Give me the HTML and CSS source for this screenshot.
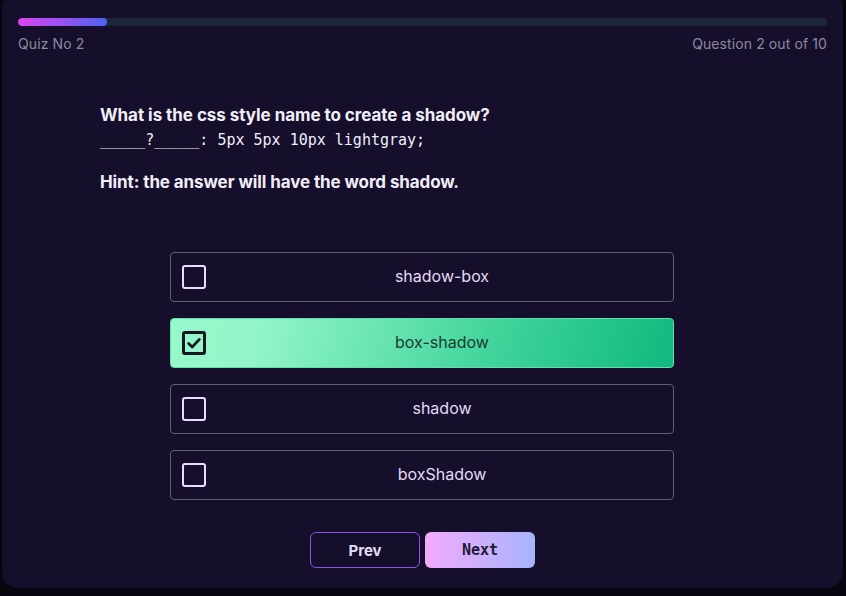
FILE: index.html
```html
<!DOCTYPE html>
<html>
<head>
<meta charset="utf-8">
<link rel="stylesheet" href="styles.css">
</head>
<body>
<div class="card">
  <div class="progress"><div class="fill" style="width:11%"></div></div>
  <div class="labels"><span>Quiz No 2</span><span>Question 2 out of 10</span></div>
  <div class="question">
    <p class="q">What is the css style name to create a shadow?</p>
    <p class="code">_____?_____: 5px 5px 10px lightgray;</p>
    <p class="hint">Hint: the answer will have the word shadow.</p>
  </div>
  <div class="options">
    <div class="option"><span class="box"></span><span class="label">shadow-box</span></div>
    <div class="option selected"><span class="box"><svg viewBox="0 0 20 20" width="18" height="18"><path d="M4 10.5l4 4 8-8.5" fill="none" stroke="#15161f" stroke-width="3" stroke-linecap="round" stroke-linejoin="round"/></svg></span><span class="label">box-shadow</span></div>
    <div class="option"><span class="box"></span><span class="label">shadow</span></div>
    <div class="option"><span class="box"></span><span class="label">boxShadow</span></div>
  </div>
  <div class="nav">
    <button class="btn prev">Prev</button>
    <button class="btn next">Next</button>
  </div>
</div>
</body>
</html>
```
FILE: styles.css
```css
html, body { margin: 0; padding: 0; }
body {
  background: #06060f;
  height: 596px;
  overflow: hidden;
  font-family: "Inter", "Liberation Sans", sans-serif;
}
.card {
  margin: -8px 3px 0 2px;
  height: 596px;
  box-sizing: border-box;
  background: #150f2c;
  border-radius: 16px;
  padding: 26px 16px 0 16px;
  display: flex;
  flex-direction: column;
}
.progress {
  height: 8px;
  border-radius: 4px;
  background: #1c2639;
  overflow: hidden;
}
.fill {
  height: 100%;
  border-radius: 4px;
  background: linear-gradient(90deg, #dc45f0, #4f61f3);
}
.labels {
  display: flex;
  justify-content: space-between;
  margin-top: 9px;
  font-size: 14px;
  line-height: 18px;
  color: #8d899f;
  letter-spacing: 0.1px;
}
.question {
  margin: 52px 0 0 82px;
  color: #f1eef8;
}
.question p { margin: 0; }
.q {
  font-weight: 700;
  font-size: 17px;
  line-height: 20px;
  letter-spacing: -0.05px;
}
.code {
  margin-top: 5px !important;
  font-family: "DejaVu Sans Mono", monospace;
  font-size: 15px;
  line-height: 20px;
}
.hint {
  margin-top: 22px !important;
  font-weight: 700;
  font-size: 17px;
  line-height: 20px;
  letter-spacing: -0.1px;
}
.options {
  margin: 60px 0 0 152px;
  width: 504px;
  display: flex;
  flex-direction: column;
  gap: 16px;
}
.option {
  height: 50px;
  box-sizing: border-box;
  border: 1px solid #625c78;
  border-radius: 4px;
  display: flex;
  align-items: center;
  padding-left: 11px;
}
.box {
  width: 24px;
  height: 24px;
  box-sizing: border-box;
  border: 2px solid #e9dcff;
  border-radius: 3px;
  display: flex;
  align-items: center;
  justify-content: center;
  flex: none;
}
.label {
  flex: 1;
  text-align: center;
  font-size: 16px;
  line-height: 20px;
  color: #e5daf6;
  margin: 0 0 3px 5px;
}
.option.selected {
  border-color: #5ee0aa;
  background: linear-gradient(105deg, #98f8cb 0%, #92f5c9 18%, #3fd39a 65%, #10b97e 100%);
}
.option.selected .box {
  border: 3px solid #15161f;
}
.option.selected .label {
  color: #1b3b2f;
}
.nav {
  margin: 32px 0 0 292px;
  display: flex;
  gap: 5px;
}
.btn {
  width: 110px;
  height: 36px;
  border-radius: 6px;
  font-size: 15px;
  font-weight: 700;
  cursor: pointer;
}
.prev {
  background: transparent;
  border: 1px solid #8a55e8;
  color: #e6dcf7;
  font-family: "Inter", "Liberation Sans", sans-serif;
}
.next {
  border: none;
  background: linear-gradient(90deg, #f1abfc, #a8b3fc);
  color: #221a33;
  font-family: "DejaVu Sans Mono", monospace;
}
```
